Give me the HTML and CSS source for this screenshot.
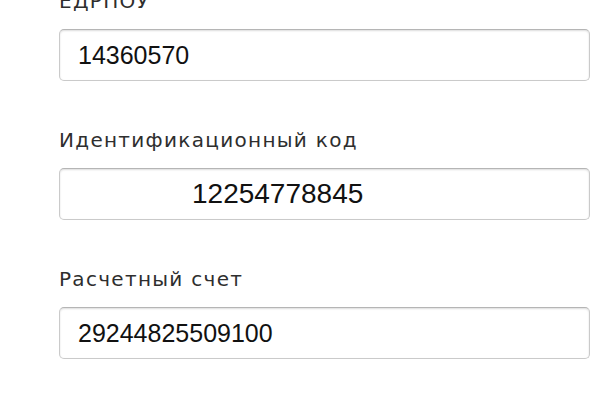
FILE: index.html
```html
<!DOCTYPE html>
<html lang="ru">
<head>
<meta charset="utf-8">
<title>Реквизиты</title>
<link rel="stylesheet" href="styles.css">
</head>
<body>
<form class="form">
  <div class="field">
    <label class="label" for="edrpou">ЕДРПОУ</label>
    <input class="input" id="edrpou" type="text" value="14360570">
  </div>
  <div class="field">
    <label class="label" for="idcode">Идентификационный код</label>
    <input class="input input-wide" id="idcode" type="text" value="12254778845">
  </div>
  <div class="field">
    <label class="label" for="account">Расчетный счет</label>
    <input class="input" id="account" type="text" value="29244825509100">
  </div>
</form>
</body>
</html>
```
FILE: styles.css
```css
html, body {
  margin: 0;
  padding: 0;
  background: #ffffff;
}

.form {
  margin-top: -11px;
  padding: 0 10px 0 59px;
}

.field {
  margin-bottom: 47px;
}

.label {
  display: block;
  font-family: "DejaVu Sans", "Verdana", sans-serif;
  font-size: 20px;
  line-height: 24px;
  letter-spacing: 1.3px;
  color: #2e2e2e;
  margin-bottom: 16px;
}

.input {
  display: block;
  box-sizing: border-box;
  width: 531px;
  height: 52px;
  margin: 0;
  padding: 0 10px 0 18px;
  border: 1px solid #cacaca;
  border-top-color: #b5b5b5;
  border-radius: 5px;
  box-shadow: inset 0 1px 2px rgba(0, 0, 0, 0.14);
  background: #ffffff;
  font-family: "Liberation Sans", Arial, sans-serif;
  font-size: 25px;
  color: #111111;
  outline: none;
}

.input-wide {
  font-size: 28px;
  padding-left: 132px;
}
```
